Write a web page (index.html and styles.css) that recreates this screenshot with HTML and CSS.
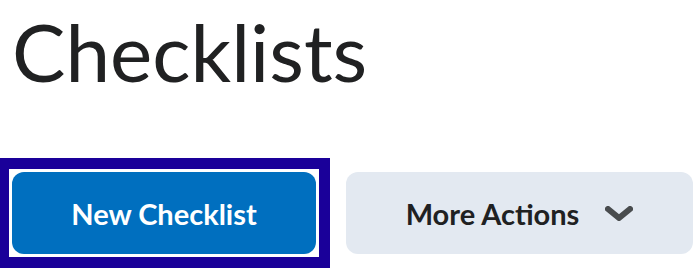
FILE: index.html
```html
<!DOCTYPE html>
<html lang="en">
<head>
<meta charset="utf-8">
<title>Checklists</title>
<link rel="stylesheet" href="styles.css">
</head>
<body>
<main class="page">
  <h1 class="title">Checklists</h1>
  <div class="actions">
    <button class="btn btn-primary is-focused" type="button">New Checklist</button>
    <button class="btn btn-secondary" type="button">
      <span>More Actions</span>
      <svg class="chevron" viewBox="0 0 28 15" width="28" height="15" aria-hidden="true">
        <path d="M3 3 L14 12 L25 3" fill="none" stroke="currentColor" stroke-width="6" stroke-linecap="round" stroke-linejoin="round"/>
      </svg>
    </button>
  </div>
</main>
</body>
</html>
```
FILE: styles.css
```css
html, body {
  margin: 0;
  padding: 0;
  background: #ffffff;
}
body {
  font-family: Lato, "Liberation Sans", sans-serif;
  color: #202122;
  overflow: hidden;
  min-height: 268px;
}
.page {
  padding: 5px 0 0 12px;
}
.title {
  margin: 0;
  font-size: 80px;
  font-weight: 400;
  line-height: 93px;
  color: #202122;
}
.actions {
  display: flex;
  gap: 30px;
  margin-top: 74px;
}
.btn {
  position: relative;
  height: 82px;
  border: none;
  border-radius: 12px;
  font-family: Lato, "Liberation Sans", sans-serif;
  font-size: 29px;
  font-weight: 700;
  display: flex;
  align-items: center;
  justify-content: center;
  padding: 0;
  cursor: pointer;
}
.btn-primary {
  width: 304px;
  flex: none;
  background: #006fbf;
  color: #ffffff;
}
.is-focused::after {
  content: "";
  position: absolute;
  inset: -14px;
  border: 11px solid #1a0099;
  pointer-events: none;
}
.btn-secondary {
  width: 347px;
  flex: none;
  background: #e3e9f1;
  color: #202122;
  gap: 26px;
}
.chevron {
  color: #494c4e;
  display: block;
}
```
